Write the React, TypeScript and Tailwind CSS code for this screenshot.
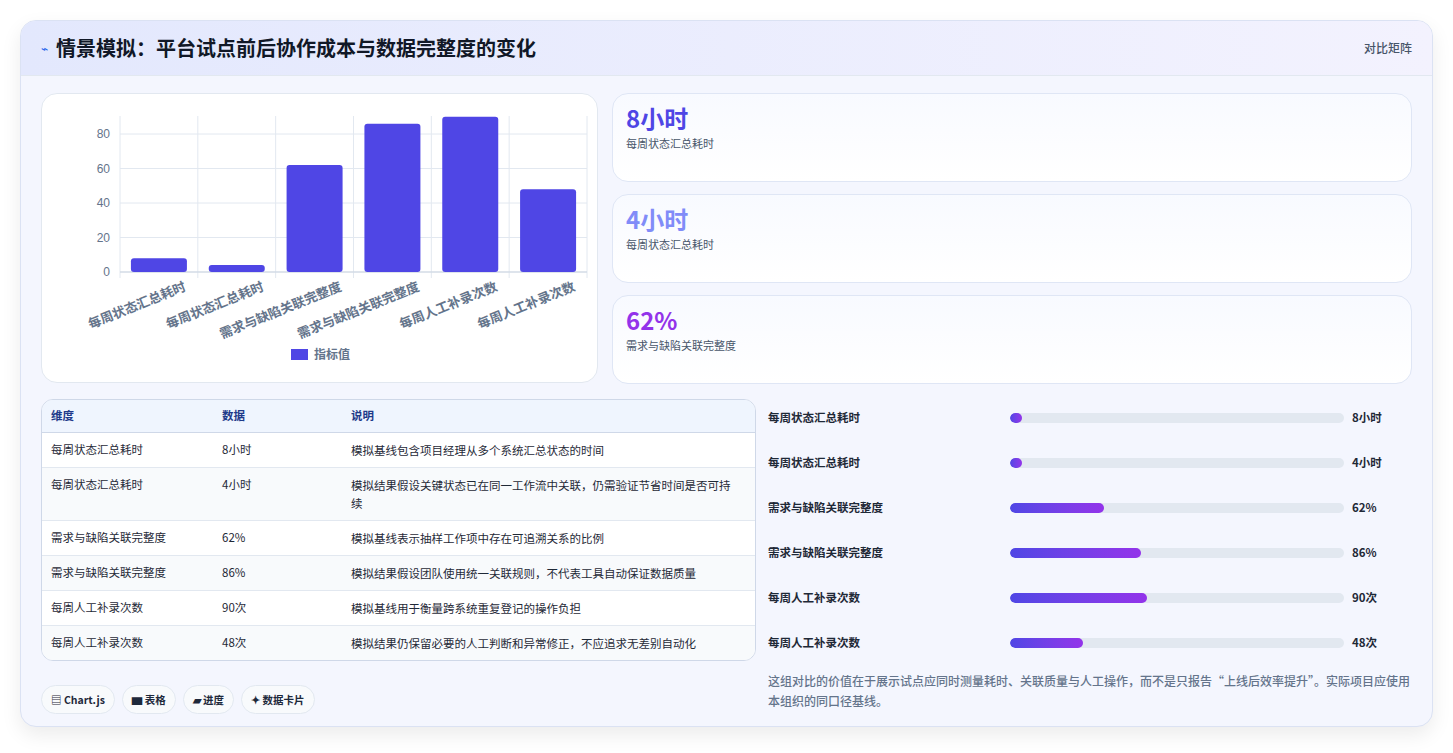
const font = { fontFamily: '"Noto Sans CJK SC", "Noto Sans", sans-serif' };

const kpis = [
  { v: "8小时", c: "text-[#4f46e5]", l: "每周状态汇总耗时" },
  { v: "4小时", c: "text-[#818cf8]", l: "每周状态汇总耗时" },
  { v: "62%", c: "text-[#9333ea]", l: "需求与缺陷关联完整度" },
];

const rows = [
  ["每周状态汇总耗时", "8小时", "模拟基线包含项目经理从多个系统汇总状态的时间", 8],
  ["每周状态汇总耗时", "4小时", "模拟结果假设关键状态已在同一工作流中关联，仍需验证节省时间是否可持续", 4],
  ["需求与缺陷关联完整度", "62%", "模拟基线表示抽样工作项中存在可追溯关系的比例", 62],
  ["需求与缺陷关联完整度", "86%", "模拟结果假设团队使用统一关联规则，不代表工具自动保证数据质量", 86],
  ["每周人工补录次数", "90次", "模拟基线用于衡量跨系统重复登记的操作负担", 90],
  ["每周人工补录次数", "48次", "模拟结果仍保留必要的人工判断和异常修正，不应追求无差别自动化", 48],
] as const;

function Chart() {
  const x0 = 78, x1 = 545, y0 = 178, k = 1.725;
  const w = (x1 - x0) / 6;
  return (
    <svg width="557" height="290" viewBox="0 0 557 290">
      {[0, 20, 40, 60, 80].map((t) => (
        <g key={t}>
          <line x1={x0} x2={x1} y1={y0 - t * k} y2={y0 - t * k} stroke="#e2e8f0" />
          <text x={x0 - 10} y={y0 - t * k + 4} textAnchor="end" fontSize="12" fill="#64748b" fontFamily="Liberation Sans, sans-serif">{t}</text>
        </g>
      ))}
      {Array.from({ length: 7 }).map((_, i) => (
        <line key={i} x1={x0 + i * w} x2={x0 + i * w} y1={22} y2={y0 + 6} stroke="#e2e8f0" />
      ))}
      <line x1={x0} x2={x1} y1={y0} y2={y0} stroke="#cbd5e1" />
      {rows.map((r, i) => {
        const h = (r[3] as number) * k;
        const cx = x0 + i * w + w / 2;
        return (
          <g key={i}>
            <rect x={cx - 28} y={y0 - h} width="56" height={h} rx="3" fill="#4f46e5" />
            <text x={cx + 28} y={y0 + 18} textAnchor="end" fontSize="13" fontWeight="600" fill="#64748b" transform={`rotate(-22 ${cx + 28} ${y0 + 18})`} style={font}>{r[0]}</text>
          </g>
        );
      })}
      <rect x="249" y="255" width="17" height="11" fill="#4f46e5" />
      <text x="272" y="265" fontSize="12" fontWeight="600" fill="#64748b" style={font}>指标值</text>
    </svg>
  );
}

export default function App() {
  return (
    <div className="min-h-screen bg-white p-5" style={font}>
      <div className="rounded-2xl border border-[#dbe2f3] bg-[#f4f6fe] shadow-[0_8px_20px_rgba(0,0,0,0.08)] overflow-hidden">
        <div className="flex items-center justify-between h-[55px] px-5 bg-gradient-to-r from-[#e3e8fd] to-[#f3f2fe] border-b border-[#e2e8f0]">
          <div className="flex items-center gap-2">
            <span className="text-[#2563eb] text-xs">⌁</span>
            <h1 className="text-[20px] font-bold text-[#111827]">情景模拟：平台试点前后协作成本与数据完整度的变化</h1>
          </div>
          <span className="text-xs font-medium text-[#475569]">对比矩阵</span>
        </div>
        <div className="px-5 pt-[17px] pb-[12px]">
          <div className="flex gap-[14px]">
            <div className="w-[557px] h-[290px] rounded-2xl border border-[#e2e8f0] bg-white shrink-0">
              <Chart />
            </div>
            <div className="flex-1 flex flex-col gap-3">
              {kpis.map((k, i) => (
                <div key={i} className="h-[89px] rounded-2xl border border-[#dfe6f5] bg-gradient-to-b from-[#f8faff] to-white px-[13px] pt-[8px]">
                  <div className={`text-[24px] font-bold leading-8 ${k.c}`}>{k.v}</div>
                  <div className="text-[11px] text-[#475569] mt-[1px]">{k.l}</div>
                </div>
              ))}
            </div>
          </div>
          <div className="flex gap-3 mt-[15px]">
            <div className="w-[715px] shrink-0">
              <div className="rounded-xl border border-[#cfd8e8] overflow-hidden bg-white text-[11.5px]">
                <div className="grid grid-cols-[171px_129px_1fr] bg-[#eff5fe] h-[33px] items-center px-[9px] text-[#1e3a8a] font-semibold border-b border-[#cfd8e8]">
                  <span>维度</span><span>数据</span><span>说明</span>
                </div>
                {rows.map((r, i) => (
                  <div key={i} className={`grid grid-cols-[171px_129px_1fr] pl-[9px] pr-[22px] py-[8px] text-[#1f2937] ${i < 5 ? "border-b border-[#e2e8f0]" : ""} ${i % 2 ? "bg-[#f8fafc]" : "bg-white"}`}>
                    <span>{r[0]}</span><span>{r[1]}</span><span className="leading-[18px]">{r[2]}</span>
                  </div>
                ))}
              </div>
              <div className="flex gap-[7px] mt-6 text-[10.5px] font-semibold text-[#1e293b]">
                {["▤ Chart.js", "▆ 表格", "▰ 进度", "✦ 数据卡片"].map((t) => (
                  <span key={t} className="px-[9px] h-[29px] flex items-center rounded-full border border-[#e2e8f0] bg-[#f8fafc]">{t}</span>
                ))}
              </div>
            </div>
            <div className="flex-1">
              <div className="flex flex-col -mt-[4px]">
                {rows.map((r, i) => (
                  <div key={i} className="h-[45px] flex items-center text-[11.5px] font-semibold text-[#1f2937]">
                    <span className="w-[242px]">{r[0]}</span>
                    <div className="w-[334px] h-[10px] rounded-full bg-[#e2e8f0] overflow-hidden">
                      <div className="h-full rounded-full bg-gradient-to-r from-[#4f46e5] to-[#9333ea]" style={{ width: `${Math.max(((r[3] as number) / 220) * 100, 3.6)}%` }} />
                    </div>
                    <span className="ml-2">{r[1]}</span>
                  </div>
                ))}
              </div>
              <p className="mt-[6px] text-[12px] font-medium leading-[20px] text-[#64748b] -mr-2">这组对比的价值在于展示试点应同时测量耗时、关联质量与人工操作，而不是只报告“上线后效率提升”。实际项目应使用本组织的同口径基线。</p>
            </div>
          </div>
        </div>
      </div>
    </div>
  );
}
